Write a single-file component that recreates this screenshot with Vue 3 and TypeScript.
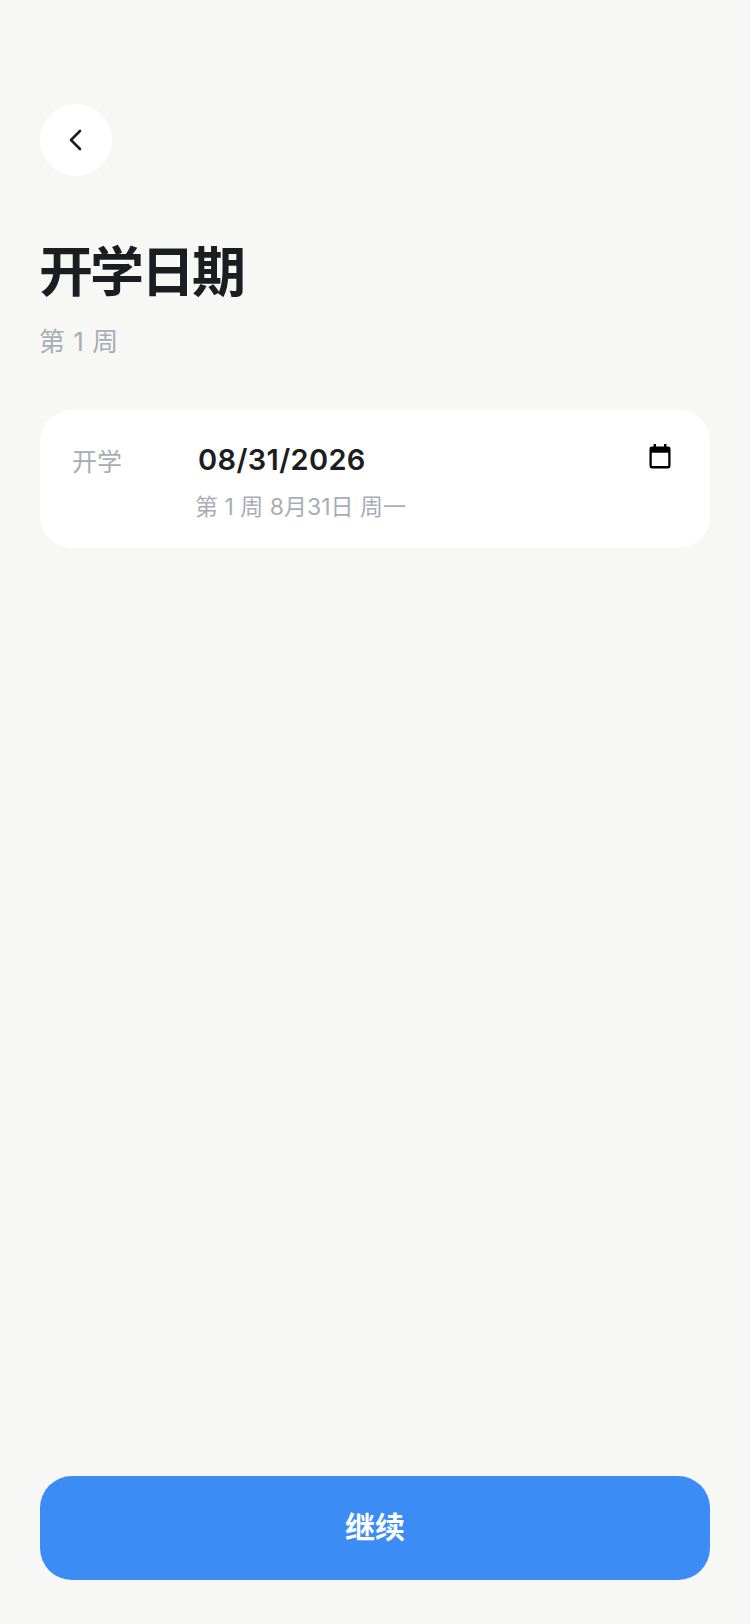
<template>
  <div class="page">
    <button class="back" aria-label="返回">
      <svg width="28" height="28" viewBox="0 0 28 28" fill="none" stroke="#1c1d20" stroke-width="2.6" stroke-linecap="round" stroke-linejoin="round"><path d="M18 5l-9 9 9 9" /></svg>
    </button>

    <h1 class="title">开学日期</h1>
    <p class="sub">第 1 周</p>

    <div class="card">
      <div class="label">开学</div>
      <div class="body">
        <div class="date-row">
          <span class="date">{{ date }}</span>
          <svg class="cal" width="22" height="25" viewBox="0 0 24 26" fill="#000" preserveAspectRatio="none">
            <rect x="5" y="0" width="2.6" height="5" />
            <rect x="16.4" y="0" width="2.6" height="5" />
            <path fill-rule="evenodd" d="M3 2.500h18a2.500 2.500 0 0 1 2.500 2.500v18a2.500 2.500 0 0 1-2.500 2.500H3A2.500 2.500 0 0 1 .5 23V5A2.500 2.500 0 0 1 3 2.500zM3 9v14h18V9z" />
          </svg>
        </div>
        <div class="hint">{{ hint }}</div>
      </div>
    </div>

    <button class="next">继续</button>
  </div>
</template>

<script setup lang="ts">
const date = '08/31/2026'
const hint = '第 1 周 8月31日 周一'
</script>

<style scoped>
.page {
  box-sizing: border-box;
  height: 1624px;
  padding: 104px 40px 44px;
  display: flex;
  flex-direction: column;
  background: #f7f7f5;
  font-family: Inter, "Noto Sans CJK SC", sans-serif;
}
.back {
  width: 72px;
  height: 72px;
  padding: 0;
  border: none;
  border-radius: 50%;
  background: #fff;
  display: flex;
  align-items: center;
  justify-content: center;
}
.title {
  margin: 61px 0 0 -1px;
  font-size: 54px;
  line-height: 72px;
  font-weight: 700;
  letter-spacing: -3px;
  color: #1c1d20;
}
.sub {
  margin: 15px 0 0 -1px;
  font-size: 26px;
  line-height: 36px;
  word-spacing: 1px;
  color: #a9adb6;
}
.card {
  margin-top: 50px;
  height: 138px;
  box-sizing: border-box;
  padding: 32px 32px 0;
  display: flex;
  background: #fff;
  border-radius: 32px;
}
.label {
  width: 126px;
  flex: none;
  font-size: 25px;
  line-height: 40px;
  color: #a9adb6;
}
.body {
  flex: 1;
}
.date-row {
  display: flex;
  justify-content: space-between;
  align-items: flex-start;
  padding-right: 7px;
}
.date {
  font-size: 29px;
  line-height: 36px;
  font-weight: 600;
  letter-spacing: 0.35px;
  color: #1c1d20;
}
.cal {
  margin-top: 2px;
}
.hint {
  margin: 11px 0 0 -3px;
  font-size: 23px;
  line-height: 36px;
  color: #a9adb6;
}
.next {
  margin-top: auto;
  height: 104px;
  padding: 0 0 6px;
  border: none;
  border-radius: 32px;
  background: #3c8cf6;
  color: #fff;
  font-family: inherit;
  font-size: 30px;
  font-weight: 700;
}
</style>
